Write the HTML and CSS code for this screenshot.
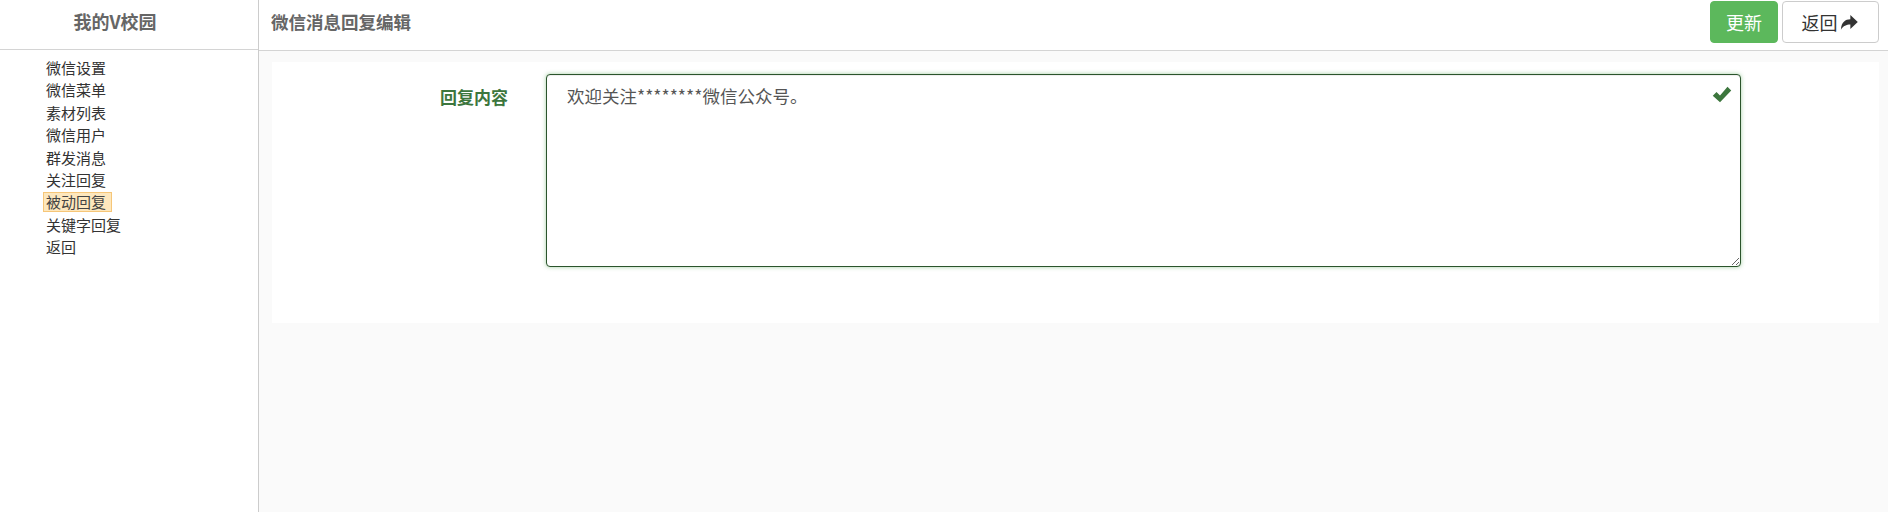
FILE: index.html
```html
<!DOCTYPE html>
<html>
	<head>
		<meta charset="utf-8">
		<title>微信消息回复编辑</title>
		<link rel="stylesheet" href="styles.css">
	</head>
	<body>
		<div class="page">
			<div class="sidebar">
				<div class="brand">我的V校园</div>
				<ul class="menu">
					<li>微信设置</li>
					<li>微信菜单</li>
					<li>素材列表</li>
					<li>微信用户</li>
					<li>群发消息</li>
					<li>关注回复</li>
					<li><span class="active">被动回复</span></li>
					<li>关键字回复</li>
					<li>返回</li>
				</ul>
			</div>
			<div class="main">
				<div class="topbar">
					<div class="title">微信消息回复编辑</div>
					<div class="actions">
						<button class="btn btn-success">更新</button>
						<button class="btn btn-default">返回
							<svg class="icon-share" viewBox="0 0 16 16" width="18" height="18"><path d="M0.8 14.8 C1.2 8.2 4.8 5.6 9.2 5.6 L9.2 1.8 L15.8 8 L9.2 14.2 L9.2 10.2 C5.6 10.2 3 11.4 0.8 14.8 Z" fill="#333"/></svg>
						</button>
					</div>
				</div>
				<div class="content">
					<div class="panel">
						<form class="form-row" action="#">
							<label class="label" for="reply">回复内容</label>
							<div class="field">
								<textarea id="reply" class="form-control">欢迎关注********微信公众号。</textarea>
								<svg class="feedback" viewBox="0 0 16 16" width="20" height="20"><path d="M0.6 9.4 L3.6 6.4 L6.4 9.2 L12.4 2.2 L15.4 5.2 L6.4 14.6 Z" fill="#3c763d"/></svg>
							</div>
						</form>
					</div>
				</div>
			</div>
		</div>
	</body>
</html>
```

FILE: styles.css
```css
body {
	margin: 0;
	font-family: "Noto Sans CJK SC", "Noto Sans", sans-serif;
	color: #333;
	background-color: #fafafa;
}

.page {
	display: flex;
	height: 512px;
}

.sidebar {
	width: 258px;
	border-right: 1px solid #ccc;
	background-color: #fff;
}

.brand {
	height: 49px;
	line-height: 43px;
	padding-right: 28px;
	text-align: center;
	font-size: 18px;
	font-weight: bold;
	color: #666;
	border-bottom: 1px solid #d4d4d4;
}

.menu {
	list-style: none;
	margin: 0;
	padding: 7px 0 0 46px;
	font-size: 15px;
	line-height: 22.4px;
}

.active {
	display: inline-block;
	line-height: 18px;
	margin-left: -3px;
	padding: 0 5px 0 2px;
	background-color: #fde7bd;
	border: 1px solid #f6c678;
	color: #444;
}

.main {
	flex: 1;
	display: flex;
	flex-direction: column;
}

.topbar {
	height: 51px;
	display: flex;
	justify-content: space-between;
	align-items: flex-start;
	padding: 1px 9px 0 12px;
	box-sizing: border-box;
	background-color: #fff;
	border-bottom: 1px solid #d4d4d4;
}

.title {
	line-height: 41px;
	font-size: 17.5px;
	font-weight: bold;
	color: #666;
}

.actions {
	display: flex;
	gap: 4px;
}

.btn {
	height: 42px;
	font-family: inherit;
	font-size: 18px;
	border-radius: 4px;
	border: 1px solid transparent;
	cursor: pointer;
	display: flex;
	align-items: center;
	justify-content: center;
}

.btn-success {
	width: 68px;
	background-color: #5cb85c;
	border-color: #5cb85c;
	color: #fff;
}

.btn-default {
	width: 97px;
	background-color: #fff;
	border-color: #ccc;
	color: #333;
	gap: 2px;
	padding-left: 4px;
}

.content {
	padding: 11px 9px 0 13px;
}

.panel {
	height: 261px;
	background-color: #fff;
	padding-top: 12px;
	box-sizing: border-box;
}

.form-row {
	display: grid;
	grid-template-columns: 236px 1195px;
	column-gap: 38px;
	margin: 0;
}

.label {
	text-align: right;
	padding-top: 10px;
	line-height: 25px;
	font-size: 17px;
	font-weight: bold;
	color: #3c763d;
}

.field {
	position: relative;
}

.form-control {
	display: block;
	width: 1195px;
	height: 193px;
	box-sizing: border-box;
	padding: 8px 20px;
	font-family: inherit;
	font-size: 17.5px;
	line-height: 25px;
	color: #555;
	border: 1px solid #2b542c;
	border-radius: 4px;
	box-shadow: inset 0 1px 1px rgba(0,0,0,.075), 0 0 4px rgba(103,177,104,.6);
	outline: none;
	resize: vertical;
}

.feedback {
	position: absolute;
	top: 10px;
	right: 9px;
}
```
